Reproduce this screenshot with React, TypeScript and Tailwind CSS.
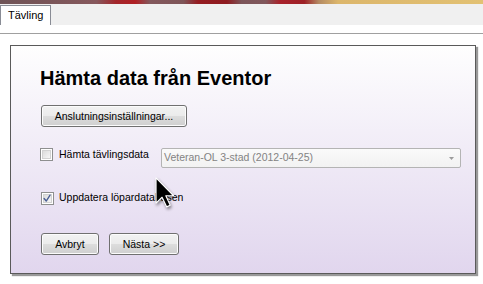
import React from "react";

/* Wizard-step panel: fetch data from Eventor */

function Checkbox({ checked }: { checked?: boolean }) {
  return (
    <div className="relative h-[13px] w-[13px] flex-none border border-[#8e8f8f] bg-white p-[1px]">
      <div className="h-full w-full border border-[#d2d2d2] bg-gradient-to-br from-[#dcdcdc] to-[#f6f6f6]" />
      {checked && (
        <svg viewBox="0 0 13 13" className="absolute left-0 top-0 h-[11px] w-[11px]" fill="none">
          <path d="M2.5 6.5 L5 9.5 L9.5 2.5" stroke="#4a5e94" strokeWidth={1.6} strokeLinecap="round" strokeLinejoin="round" />
        </svg>
      )}
    </div>
  );
}

function Button({ children, className = "" }: { children: React.ReactNode; className?: string }) {
  return (
    <button
      type="button"
      className={`h-[22px] rounded-[3px] border border-[#707070] bg-[linear-gradient(to_bottom,#f2f2f2_0%,#ebebeb_50%,#dddddd_50%,#cfcfcf_100%)] text-[10.5px] leading-none text-black shadow-[inset_0_0_0_1px_#fcfcfc] ${className}`}
    >
      {children}
    </button>
  );
}

function Cursor() {
  return (
    <svg
      viewBox="0 0 12 19"
      className="absolute left-[155px] top-[177px] h-[31px] w-[20px] drop-shadow-[1px_2px_1.5px_rgba(0,0,0,0.45)]"
    >
      <path d="M0.5 0.5 L0.5 16 L4.2 12.4 L7 18.3 L9.2 17.3 L6.5 11.5 L11.3 11.5 Z" fill="#000" stroke="#fff" strokeWidth={0.7} strokeLinejoin="round" />
    </svg>
  );
}

export default function App() {
  return (
    <div className="relative h-[284px] w-[483px] overflow-hidden bg-white font-['Liberation_Sans',Arial,sans-serif]">
      {/* blurred window title strip */}
      <div className="h-[4px] bg-[linear-gradient(to_right,#6f5457_0%,#86585c_20%,#a3262b_24%,#b01f24_28%,#83585c_31%,#7e5558_38%,#951c21_41%,#8e1b20_47%,#7c5559_50%,#80575b_55%,#a8212a_58%,#9d2026_63%,#b48a63_66%,#dcb66b_70%,#e2c173_100%)]" />

      {/* tab strip */}
      <div className="h-[21px] bg-[#f0f0f0] pt-[1px]">
        <div className="flex h-[20px] w-[51px] items-center border-x border-t border-[#898c95] bg-white pl-[7px] text-[11px] text-black">
          Tävling
        </div>
      </div>
      <div className="h-[9px] border-b border-[#a0a0a0]" />

      {/* main panel */}
      <div className="ml-[10px] mt-[11px] h-[229px] w-[466px] border border-[#5a5a5a] bg-gradient-to-b from-[#fefefe] to-[#e1d6ee] pl-[29px] pt-[22px] shadow-[2px_2px_1px_rgba(0,0,0,0.4)]">
        <h1 className="text-[20px] font-bold leading-none text-black">Hämta data från Eventor</h1>

        <Button className="ml-[1px] mt-[17px] w-[146px]">Anslutningsinställningar...</Button>

        <div className="mt-[21px] flex items-start">
          <Checkbox />
          <span className="ml-[6px] w-[102px] text-[10.5px] leading-[13px] text-black">Hämta tävlingsdata</span>
          <div className="relative h-[20px] w-[300px] rounded-[2px] border border-[#b4b4b4] bg-gradient-to-b from-[#fafafa] to-[#f2f2f2] pl-[2px] pt-[2px] text-[10.5px] leading-[13px] text-[#838383]">
            Veteran-OL 3-stad (2012-04-25)
            <svg viewBox="0 0 5 3" className="absolute right-[6px] top-[8px] h-[3px] w-[5px]">
              <path d="M0 0 L5 0 L2.5 3 Z" fill="#9c9c9c" />
            </svg>
          </div>
        </div>

        <div className="mt-[23px] flex items-start">
          <div className="ml-[1px] mt-[1px]">
            <Checkbox checked />
          </div>
          <span className="ml-[5px] text-[10.5px] leading-[13px] text-black">Uppdatera löpardatabasen</span>
        </div>

        <div className="ml-[1px] mt-[28px] flex gap-[10px]">
          <Button className="w-[58px]">Avbryt</Button>
          <Button className="w-[70px]">Nästa &gt;&gt;</Button>
        </div>
      </div>

      <Cursor />
    </div>
  );
}
